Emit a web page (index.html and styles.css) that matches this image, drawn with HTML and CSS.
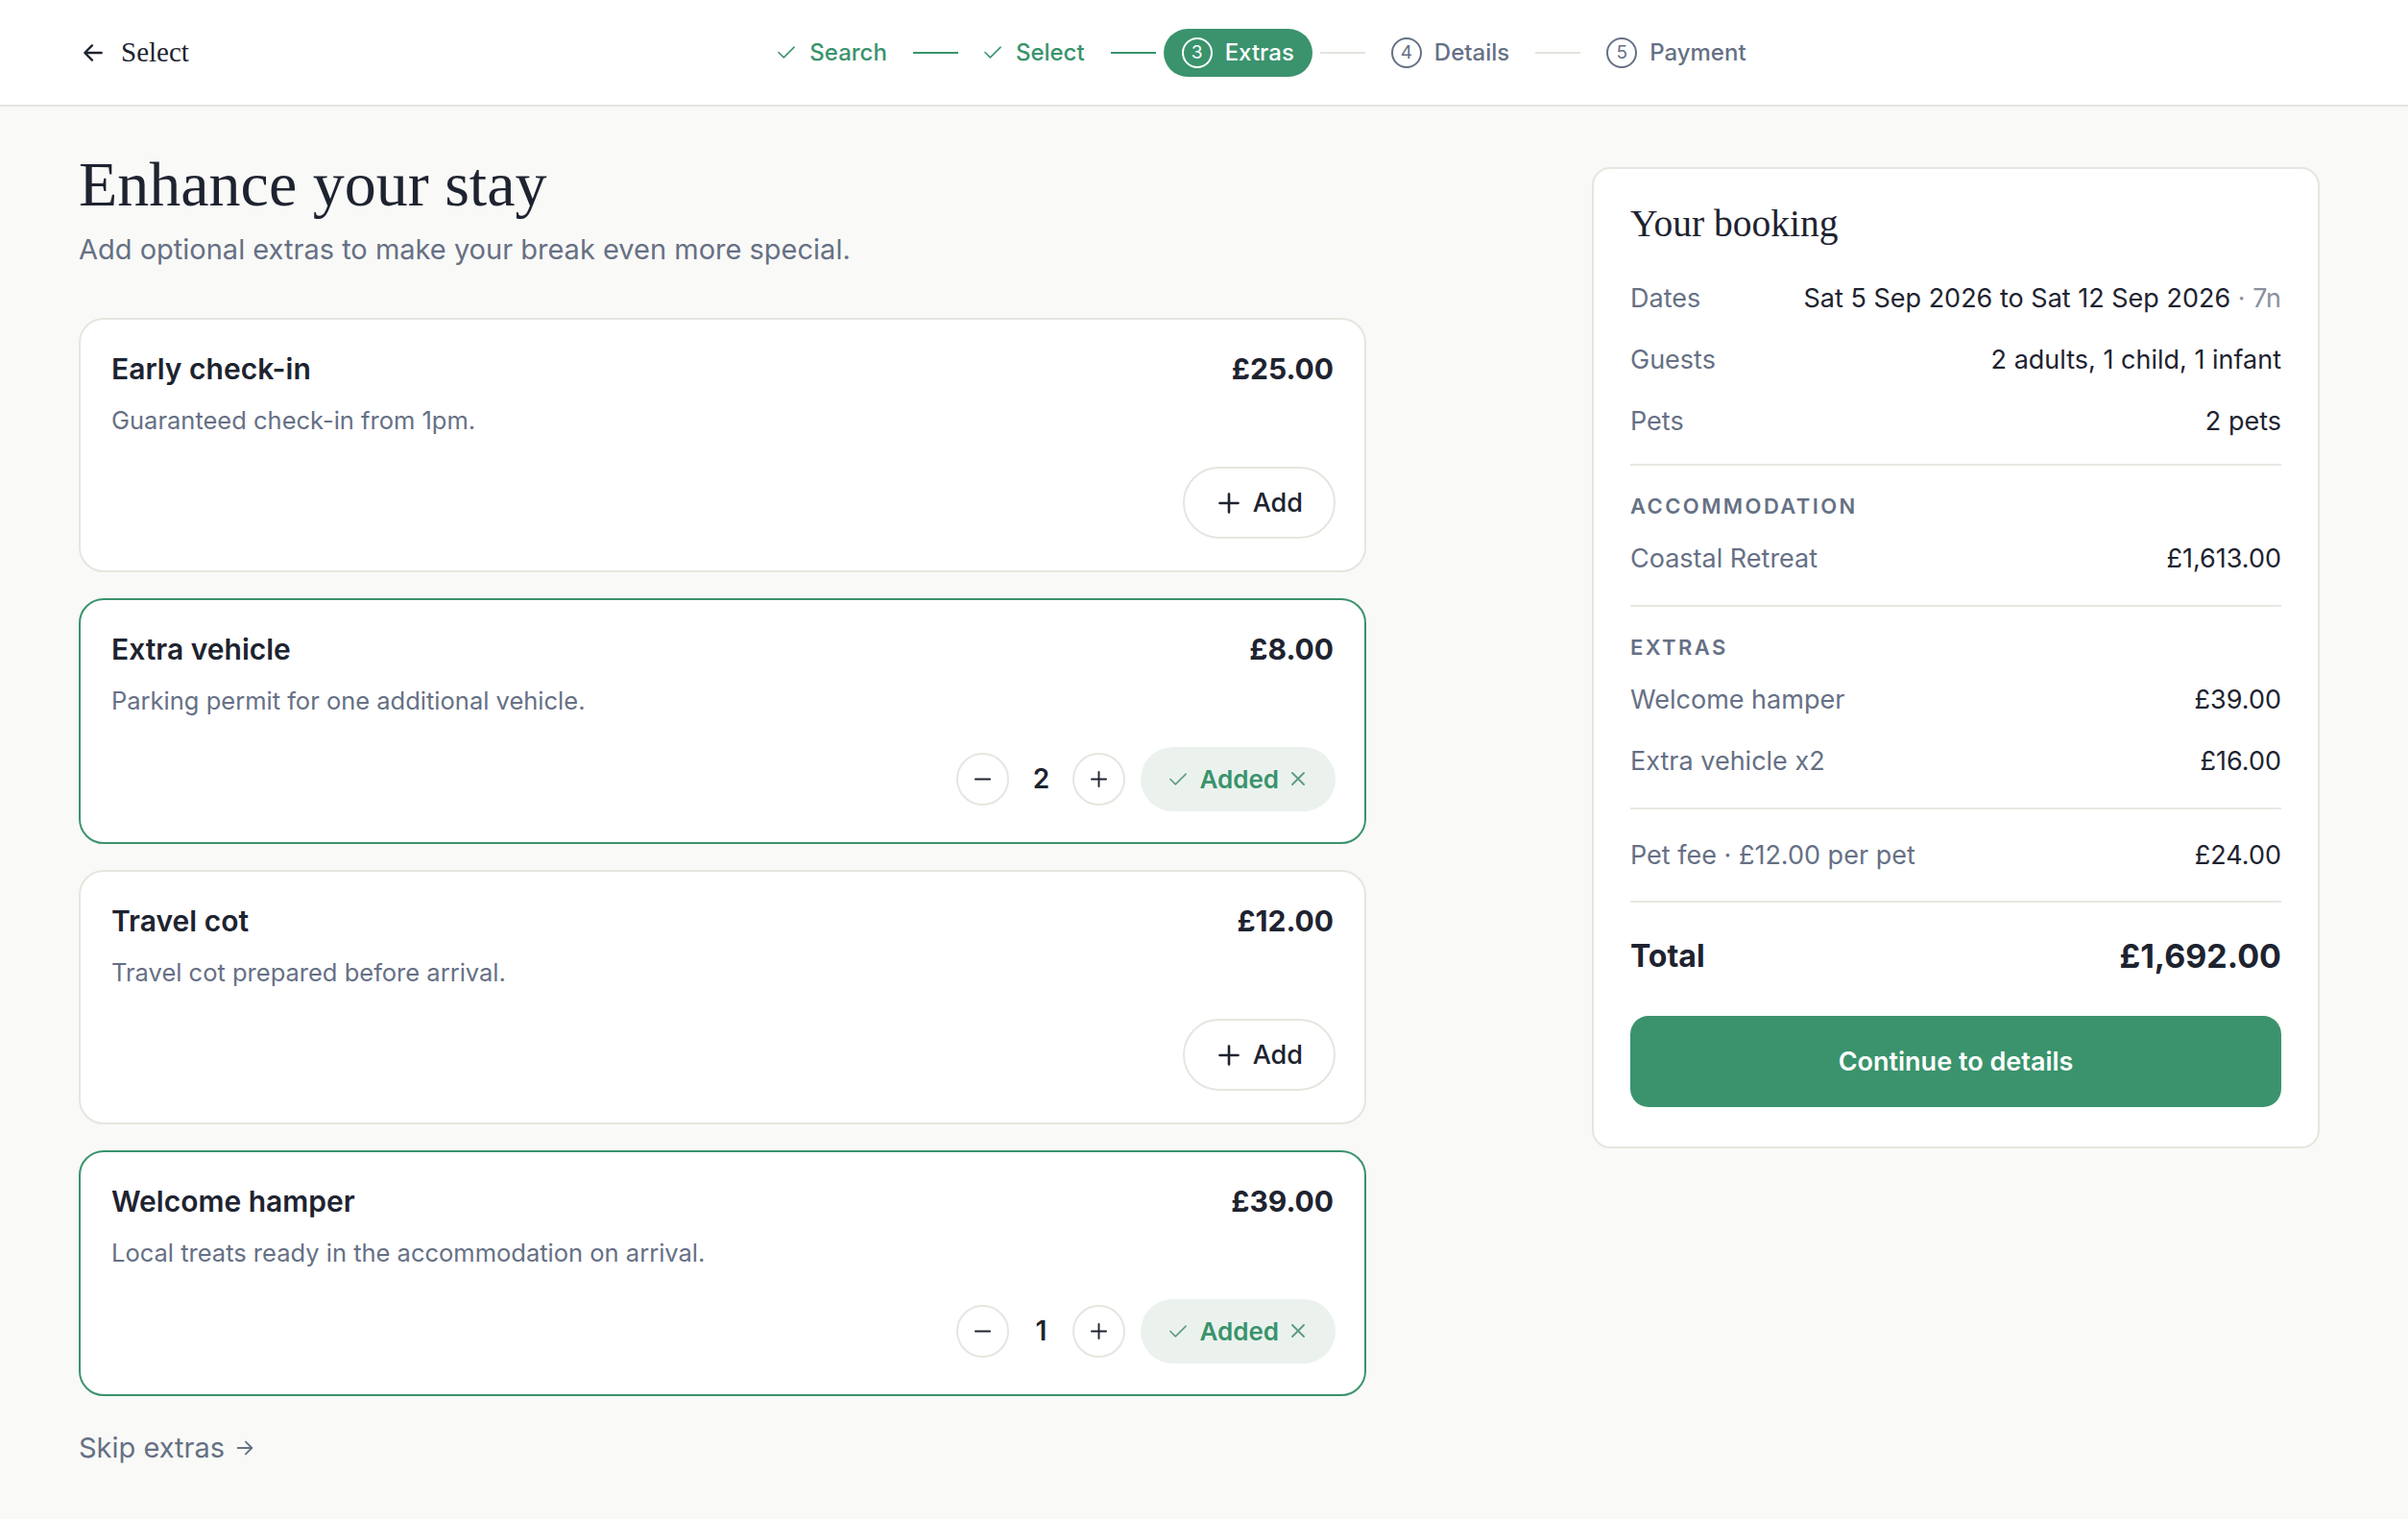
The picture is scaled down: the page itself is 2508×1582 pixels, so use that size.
FILE: index.html
```html
<!DOCTYPE html>
<html lang="en">
<head>
<meta charset="utf-8">
<title>Enhance your stay · Extras</title>
<link rel="stylesheet" href="styles.css">
</head>
<body>
<header class="topbar">
  <a class="back" href="#">
    <svg class="icon-back" viewBox="0 0 24 24"><path d="M20 12H4.5M11 5l-7 7 7 7"/></svg>
    <span>Select</span>
  </a>
  <nav class="stepper">
    <div class="step done">
      <svg class="step-check" viewBox="0 0 20 14"><path d="M1 7l6 6L19 1"/></svg>
      <span>Search</span>
    </div>
    <span class="step-line done"></span>
    <div class="step done">
      <svg class="step-check" viewBox="0 0 20 14"><path d="M1 7l6 6L19 1"/></svg>
      <span>Select</span>
    </div>
    <span class="step-line done"></span>
    <div class="step active">
      <span class="step-num">3</span>
      <span>Extras</span>
    </div>
    <span class="step-line"></span>
    <div class="step">
      <span class="step-num">4</span>
      <span>Details</span>
    </div>
    <span class="step-line"></span>
    <div class="step">
      <span class="step-num">5</span>
      <span>Payment</span>
    </div>
  </nav>
</header>

<main class="page">
  <section class="extras">
    <h1>Enhance your stay</h1>
    <p class="lead">Add optional extras to make your break even more special.</p>

    <div class="extra-list">
      <article class="extra-card">
        <div class="extra-head">
          <h2>Early check-in</h2>
          <span class="extra-price">£25.00</span>
        </div>
        <p class="extra-desc">Guaranteed check-in from 1pm.</p>
        <div class="extra-actions">
          <button class="btn-add" type="button">
            <svg class="icon-plus" viewBox="0 0 22 22"><path d="M11 1.5v19M1.5 11h19"/></svg>
            <span>Add</span>
          </button>
        </div>
      </article>

      <article class="extra-card selected">
        <div class="extra-head">
          <h2>Extra vehicle</h2>
          <span class="extra-price">£8.00</span>
        </div>
        <p class="extra-desc">Parking permit for one additional vehicle.</p>
        <div class="extra-actions">
          <button class="qty-btn" type="button" aria-label="Decrease">
            <svg class="icon-sm" viewBox="0 0 18 18"><path d="M1 9h16"/></svg>
          </button>
          <span class="qty">2</span>
          <button class="qty-btn" type="button" aria-label="Increase">
            <svg class="icon-sm" viewBox="0 0 18 18"><path d="M9 1v16M1 9h16"/></svg>
          </button>
          <button class="btn-added" type="button">
            <svg class="icon-check" viewBox="0 0 20 14"><path d="M1 7l6 6L19 1"/></svg>
            <span>Added</span>
            <svg class="icon-x" viewBox="0 0 14 14"><path d="M1 1l12 12M13 1L1 13"/></svg>
          </button>
        </div>
      </article>

      <article class="extra-card">
        <div class="extra-head">
          <h2>Travel cot</h2>
          <span class="extra-price">£12.00</span>
        </div>
        <p class="extra-desc">Travel cot prepared before arrival.</p>
        <div class="extra-actions">
          <button class="btn-add" type="button">
            <svg class="icon-plus" viewBox="0 0 22 22"><path d="M11 1.5v19M1.5 11h19"/></svg>
            <span>Add</span>
          </button>
        </div>
      </article>

      <article class="extra-card selected">
        <div class="extra-head">
          <h2>Welcome hamper</h2>
          <span class="extra-price">£39.00</span>
        </div>
        <p class="extra-desc">Local treats ready in the accommodation on arrival.</p>
        <div class="extra-actions">
          <button class="qty-btn" type="button" aria-label="Decrease">
            <svg class="icon-sm" viewBox="0 0 18 18"><path d="M1 9h16"/></svg>
          </button>
          <span class="qty">1</span>
          <button class="qty-btn" type="button" aria-label="Increase">
            <svg class="icon-sm" viewBox="0 0 18 18"><path d="M9 1v16M1 9h16"/></svg>
          </button>
          <button class="btn-added" type="button">
            <svg class="icon-check" viewBox="0 0 20 14"><path d="M1 7l6 6L19 1"/></svg>
            <span>Added</span>
            <svg class="icon-x" viewBox="0 0 14 14"><path d="M1 1l12 12M13 1L1 13"/></svg>
          </button>
        </div>
      </article>
    </div>

    <a class="skip" href="#">
      <span>Skip extras</span>
      <svg class="icon-skip" viewBox="0 0 24 24"><path d="M4 12h15.5M13 5l7 7-7 7"/></svg>
    </a>
  </section>

  <aside class="summary">
    <h3>Your booking</h3>
    <div class="sum-section first">
      <div class="sum-row"><span class="sum-label">Dates</span><span class="sum-value">Sat 5 Sep 2026 to Sat 12 Sep 2026<span class="muted"> · 7n</span></span></div>
      <div class="sum-row"><span class="sum-label">Guests</span><span class="sum-value">2 adults, 1 child, 1 infant</span></div>
      <div class="sum-row"><span class="sum-label">Pets</span><span class="sum-value">2 pets</span></div>
    </div>
    <div class="sum-section">
      <div class="sum-heading">Accommodation</div>
      <div class="sum-row"><span class="sum-label">Coastal Retreat</span><span class="sum-value">£1,613.00</span></div>
    </div>
    <div class="sum-section">
      <div class="sum-heading">Extras</div>
      <div class="sum-row"><span class="sum-label">Welcome hamper</span><span class="sum-value">£39.00</span></div>
      <div class="sum-row"><span class="sum-label">Extra vehicle x2</span><span class="sum-value">£16.00</span></div>
    </div>
    <div class="sum-section fee">
      <div class="sum-row"><span class="sum-label">Pet fee · £12.00 per pet</span><span class="sum-value">£24.00</span></div>
    </div>
    <div class="sum-total">
      <span class="total-label">Total</span>
      <span class="total-value">£1,692.00</span>
    </div>
    <button class="btn-continue" type="button">Continue to details</button>
  </aside>
</main>
</body>
</html>
```

FILE: styles.css
```css
* {
  box-sizing: border-box;
}

html, body {
  margin: 0;
  padding: 0;
}

body {
  background: #f9f9f7;
  color: #1e2330;
  font-family: Inter, "Noto Sans", "Liberation Sans", sans-serif;
  min-height: 1582px;
}

a {
  color: inherit;
  text-decoration: none;
}

button {
  font-family: inherit;
  cursor: pointer;
}

svg {
  fill: none;
  stroke: currentColor;
  stroke-linecap: round;
  stroke-linejoin: round;
}

/* ---------- Top bar ---------- */
.topbar {
  height: 111px;
  background: #ffffff;
  border-bottom: 2px solid #e6e5df;
  display: flex;
  align-items: center;
  padding: 0 92px 0 82px;
  gap: 16px;
}

.back {
  display: flex;
  align-items: center;
  gap: 16px;
  font-family: "Liberation Serif", "DejaVu Serif", serif;
  font-size: 29px;
  color: #1e2330;
}

.icon-back {
  width: 26px;
  height: 26px;
  stroke-width: 2.2;
  margin-left: 2px;
}

.stepper {
  flex: 1;
  display: flex;
  justify-content: center;
  align-items: center;
  gap: 8px;
}

.step {
  display: flex;
  align-items: center;
  gap: 13px;
  height: 50px;
  padding: 0 19px;
  border-radius: 999px;
  font-size: 24px;
  font-weight: 500;
  color: #667085;
}

.step.done {
  color: #3a936c;
  gap: 15px;
}

.step-check {
  width: 18px;
  height: 13px;
  stroke-width: 1.7;
}

.step-num {
  width: 32px;
  height: 32px;
  border-radius: 50%;
  border: 2px solid currentColor;
  display: flex;
  align-items: center;
  justify-content: center;
  font-size: 19px;
  font-weight: 400;
}

.step.active {
  background: #3a936c;
  color: #ffffff;
}

.step-line {
  width: 47px;
  height: 2px;
  background: #e4e3dd;
}

.step-line.done {
  background: #3a936c;
}

/* ---------- Page ---------- */
.page {
  display: grid;
  grid-template-columns: minmax(0, 1fr) 758px;
  gap: 235px;
  padding: 48px 92px 60px 82px;
  align-items: start;
}

.extras h1 {
  margin: 0;
  font-family: "Liberation Serif", "DejaVu Serif", serif;
  font-weight: 400;
  font-size: 66px;
  line-height: 1;
  color: #1e2330;
}

.lead {
  margin: 14px 0 0;
  font-size: 29px;
  line-height: 41px;
  color: #667085;
}

.extra-list {
  margin-top: 51px;
  display: flex;
  flex-direction: column;
  gap: 27px;
}

.extra-card {
  background: #ffffff;
  border: 2px solid #e6e5df;
  border-radius: 26px;
  padding: 32px 32px 32.5px;
}

.extra-card.selected {
  border-color: #3a936c;
}

.extra-head {
  display: flex;
  justify-content: space-between;
  align-items: center;
  height: 38px;
}

.extra-head h2 {
  margin: 0;
  font-size: 30px;
  font-weight: 600;
  color: #1e2330;
}

.extra-price {
  font-size: 30px;
  font-weight: 700;
  color: #1e2330;
}

.extra-desc {
  margin: 16px 0 0;
  font-size: 25.5px;
  line-height: 38px;
  color: #667085;
}

.extra-actions {
  margin-top: 29px;
  margin-right: -2px;
  display: flex;
  justify-content: flex-end;
  align-items: center;
  gap: 16px;
}

.btn-add {
  height: 75px;
  padding: 0 32px 0 35px;
  border: 2px solid #e6e5df;
  border-radius: 999px;
  background: #ffffff;
  color: #1e2330;
  display: flex;
  align-items: center;
  gap: 14px;
  font-size: 27px;
  font-weight: 500;
}

.icon-plus {
  width: 22px;
  height: 22px;
  stroke-width: 2.6;
}

.qty-btn {
  width: 55px;
  height: 55px;
  border-radius: 50%;
  border: 2px solid #e6e5df;
  background: #ffffff;
  color: #1e2330;
  display: flex;
  align-items: center;
  justify-content: center;
  padding: 0;
}

.icon-sm {
  width: 17px;
  height: 17px;
  stroke-width: 2;
}

.qty {
  min-width: 34px;
  text-align: center;
  font-size: 28px;
  font-weight: 600;
  color: #1e2330;
}

.btn-added {
  height: 67px;
  padding: 0 32px 0 30px;
  border: none;
  border-radius: 999px;
  background: #ebf2ee;
  color: #3a936c;
  display: flex;
  align-items: center;
  gap: 13px;
  font-size: 26px;
  font-weight: 600;
}

.icon-check {
  width: 18px;
  height: 13px;
  stroke-width: 1.8;
  color: #5d9c80;
}

.icon-x {
  width: 14px;
  height: 14px;
  stroke-width: 1.9;
  color: #5d9c80;
}

.skip {
  margin-top: 34px;
  display: inline-flex;
  align-items: center;
  gap: 10px;
  font-size: 29px;
  line-height: 40px;
  color: #667085;
}

.icon-skip {
  width: 22px;
  height: 22px;
  stroke-width: 2;
}

/* ---------- Summary ---------- */
.summary {
  margin-top: 15px;
  background: #ffffff;
  border: 2px solid #e6e5df;
  border-radius: 19px;
  padding: 38px 38px 41px;
}

.summary h3 {
  margin: 0;
  font-family: "Liberation Serif", "DejaVu Serif", serif;
  font-weight: 400;
  font-size: 39.5px;
  line-height: 1;
  color: #1e2330;
}

.sum-section {
  border-top: 2px solid #e8e7e1;
  padding: 10px 0 16px;
}

.sum-section.first {
  border-top: none;
  padding: 25px 0 12px;
}

.sum-section.fee {
  padding: 16px 0 15px;
}

.sum-row {
  display: flex;
  justify-content: space-between;
  align-items: center;
  height: 64px;
  font-size: 27px;
}

.sum-label {
  color: #667085;
}

.sum-value {
  color: #1e2330;
}

.muted {
  color: #8a909c;
}

.sum-heading {
  padding-top: 16px;
  height: 55px;
  line-height: 32px;
  font-size: 22px;
  font-weight: 600;
  letter-spacing: 0.11em;
  text-transform: uppercase;
  color: #667085;
}

.sum-total {
  border-top: 2px solid #e8e7e1;
  display: flex;
  justify-content: space-between;
  align-items: center;
  height: 106px;
  padding-top: 8px;
}

.total-label {
  font-size: 32px;
  font-weight: 700;
  color: #1e2330;
}

.total-value {
  font-size: 34px;
  font-weight: 700;
  color: #1e2330;
}

.btn-continue {
  margin-top: 14px;
  width: 100%;
  height: 95px;
  border: none;
  border-radius: 19px;
  background: #3a936c;
  color: #ffffff;
  font-size: 27px;
  font-weight: 600;
}
```
